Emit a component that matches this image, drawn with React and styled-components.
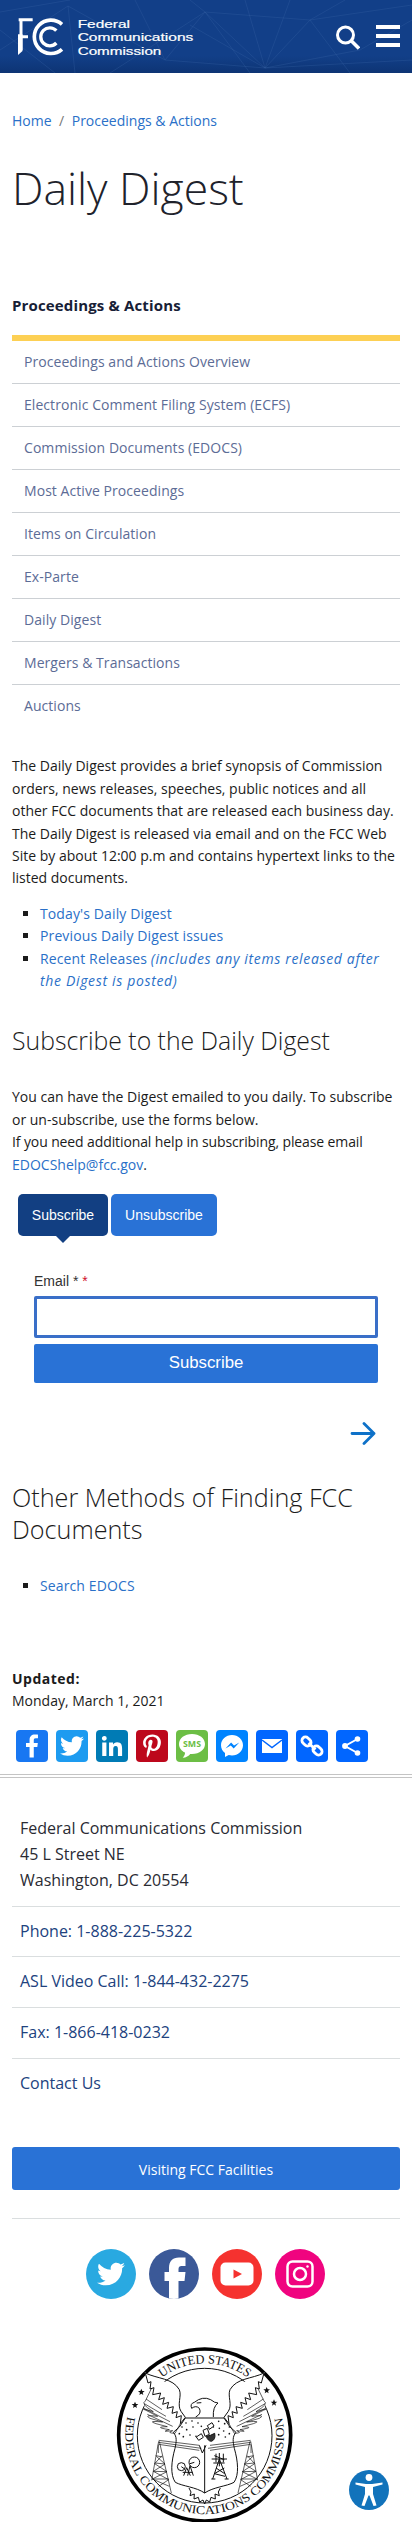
import React from "react";
import styled, { createGlobalStyle } from "styled-components";
import { FaTwitter } from "react-icons/fa";

const GlobalStyle = createGlobalStyle`
  *, *::before, *::after { box-sizing: border-box; }
  body {
    margin: 0;
    background: #fff;
    color: #1b1b1b;
    font: 400 14px/22.4px "Open Sans", sans-serif;
  }
  a { color: #2a70c8; text-decoration: none; }
  h1, h2, h3, p, ul, address { margin: 0; padding: 0; font-style: normal; }
  svg { display: block; }
`;

const Page = styled.div`
  position: relative;
  width: 412px;
  height: 2522px;
  overflow: hidden;
`;

const Header = styled.header`
  position: relative;
  display: flex;
  align-items: flex-start;
  height: 73px;
  background: linear-gradient(#123f88 0, #123f88 56px, #0d3474 73px);
`;

const HeaderLines = styled.svg`
  position: absolute;
  inset: 0;
`;

const Logo = styled.svg`
  position: relative;
  margin: 15px 0 0 15px;
`;

const HeaderTools = styled.div`
  position: relative;
  display: flex;
  gap: 16px;
  margin: 25px 12px 0 auto;
`;

const Main = styled.main`
  padding: 0 12px;
`;

const Breadcrumb = styled.nav`
  display: flex;
  gap: 7.500px;
  padding-top: 37px;
  color: #777;
`;

const Title = styled.h1`
  margin-top: 28px;
  font-size: 44.500px;
  line-height: 56px;
  font-weight: 300;
  color: #20222b;
`;

const SideTitle = styled.h3`
  margin-top: 78px;
  font-size: 15px;
  line-height: 22px;
  font-weight: 700;
  letter-spacing: 0.15px;
  color: #172036;
`;

const SideMenu = styled.ul`
  list-style: none;
  margin-top: 19px;
  border-top: 6px solid #fdd054;
`;

const SideItem = styled.li`
  height: 43px;
  padding: 10px 12px 0;
  border-bottom: 1px solid #ccd0d4;
  letter-spacing: 0.06px;
  &:last-child { border-bottom: 0; }
  a { color: #5c6c96; }
`;

const Copy = styled.p`
  margin-top: ${(p) => p.$top}px;
`;

const Tight = styled.span`
  letter-spacing: -0.11px;
`;

const BulletList = styled.ul`
  list-style: square;
  margin-top: ${(p) => p.$top}px;
  padding-left: 28px;
  letter-spacing: 0.12px;
  li::marker { color: #1b1b1b; }
  em { letter-spacing: 0.66px; }
`;

const SectionTitle = styled.h2`
  margin-top: ${(p) => p.$top}px;
  font-size: ${(p) => p.$size || 25}px;
  line-height: 32px;
  font-weight: 300;
`;

const Tabs = styled.div`
  display: flex;
  gap: 3px;
  margin: 18px 0 0 6px;
  font: 14px/42px "Liberation Sans", sans-serif;
`;

const Tab = styled.div`
  position: relative;
  width: ${(p) => p.$width}px;
  height: 42px;
  border-radius: 5px;
  text-align: center;
  color: #fff;
  background: ${(p) => (p.$active ? "#123f82" : "#2972d6")};
  &::after {
    content: "";
    display: ${(p) => (p.$active ? "block" : "none")};
    position: absolute;
    top: 41px;
    left: 37px;
    border: 8px solid transparent;
    border-top-color: #123f82;
    border-bottom: 0;
  }
`;

const Form = styled.form`
  display: flex;
  flex-direction: column;
  margin: 34px 22px 0;
  font-family: "Liberation Sans", sans-serif;
`;

const Label = styled.label`
  font-size: 14px;
  line-height: 22px;
  color: #333;
  span { color: #d0102c; }
`;

const Field = styled.input`
  height: 42px;
  margin-top: 4px;
  border: 3px solid #3a6fc8;
  border-radius: 2px;
  background: #fff;
  outline: 0;
`;

const Submit = styled.button`
  height: 39px;
  margin-top: 6px;
  padding: 0 0 1px;
  border: 0;
  border-radius: 2px;
  background: #2972d6;
  color: #fff;
  font: 16.800px "Liberation Sans", sans-serif;
`;

const NextArrow = styled.svg`
  margin: 39px 24px 0 auto;
`;

const Updated = styled.div`
  margin-top: 70px;
  b { letter-spacing: 0.5px; }
`;

const ShareRow = styled.div`
  display: flex;
  gap: 8px;
  margin: 18px 4px 0;
`;

const ShareIcon = styled.svg`
  border-radius: 4px;
  background: ${(p) => p.$bg};
`;

const Footer = styled.footer`
  margin-top: 12px;
  border-top: 1px solid #c4c4c4;
  padding: 2px 12px 0;
  &::before {
    content: "";
    display: block;
    margin: 0 -12px;
    border-top: 1px solid #c4c4c4;
  }
`;

const Contact = styled.div`
  padding: 37px 0 0;
  font-size: 16px;
  line-height: 26px;
`;

const Address = styled.address`
  height: 92px;
  padding-left: 8px;
  border-bottom: 1px solid #dadedf;
  color: #2a2b33;
`;

const ContactRow = styled.div`
  height: ${(p) => p.$height}px;
  padding: 11px 8px 0;
  border-bottom: 1px solid ${(p) => (p.$last ? "transparent" : "#dadedf")};
  a { color: #21427e; }
`;

const Visit = styled.a`
  display: block;
  height: 43px;
  margin-top: 38px;
  border-radius: 3px;
  background: #2972d6;
  text-align: center;
  line-height: 45px;
  && { color: #fff; }
`;

const Social = styled.div`
  display: flex;
  justify-content: center;
  gap: 13px;
  margin: 28px 0 0;
  padding: 30px 1px 0 0;
  border-top: 1px solid #dadedf;
`;

const Round = styled.div`
  display: flex;
  align-items: center;
  justify-content: center;
  width: 50px;
  height: 50px;
  border-radius: 50%;
  overflow: hidden;
  background: ${(p) => p.$bg};
  color: #fff;
`;

const Seal = styled.svg`
  margin: 47px 106px 0 104px;
`;

const Accessibility = styled.svg`
  position: absolute;
  left: 349px;
  top: 2470px;
`;

const menu = [
  "Proceedings and Actions Overview",
  "Electronic Comment Filing System (ECFS)",
  "Commission Documents (EDOCS)",
  "Most Active Proceedings",
  "Items on Circulation",
  "Ex-Parte",
  "Daily Digest",
  "Mergers & Transactions",
  "Auctions",
];

const FB = "M17.78 27.5V17.008h3.522l.527-4.09h-4.05v-2.61c0-1.182.33-1.99 2.023-1.99h2.166V4.66c-.375-.05-1.66-.16-3.155-.16-3.123 0-5.26 1.905-5.26 5.405v3.016h-3.53v4.09h3.53V27.5h4.223z";

const shares = [
  ["#1877f2", <path d={FB} />],
  ["#1d9bf0", <path d="M28 8.557a9.913 9.913 0 0 1-2.828.775 4.93 4.93 0 0 0 2.166-2.725 9.738 9.738 0 0 1-3.13 1.194 4.92 4.92 0 0 0-3.593-1.55 4.924 4.924 0 0 0-4.794 6.049c-4.09-.21-7.72-2.17-10.15-5.15a4.942 4.942 0 0 0-.665 2.477c0 1.71.87 3.214 2.19 4.1a4.968 4.968 0 0 1-2.23-.616v.06c0 2.39 1.7 4.38 3.952 4.83-.414.115-.85.174-1.297.174-.318 0-.626-.03-.928-.086a4.935 4.935 0 0 0 4.6 3.42 9.893 9.893 0 0 1-6.114 2.107c-.398 0-.79-.023-1.175-.068a13.953 13.953 0 0 0 7.55 2.213c9.056 0 14.01-7.507 14.01-14.013 0-.213-.005-.426-.015-.637.96-.695 1.795-1.56 2.455-2.55z" />],
  ["#007bb5", <path d="M6.227 12.61h4.19v13.48h-4.19V12.61zm2.095-6.7a2.43 2.43 0 0 1 0 4.86c-1.344 0-2.428-1.09-2.428-2.43s1.084-2.43 2.428-2.43m4.72 6.7h4.02v1.84h.058c.56-1.058 1.927-2.176 3.965-2.176 4.238 0 5.02 2.792 5.02 6.42v7.395h-4.183v-6.56c0-1.564-.03-3.574-2.178-3.574-2.18 0-2.514 1.7-2.514 3.46v6.668h-4.187V12.61z" />],
  ["#bd081c", <path d="M16.539 4.5c-6.277 0-9.442 4.5-9.442 8.253 0 2.272.86 4.293 2.705 5.046.303.125.574.005.662-.33.061-.231.205-.816.27-1.06.088-.331.053-.447-.191-.736-.532-.627-.873-1.439-.873-2.591 0-3.338 2.498-6.327 6.505-6.327 3.548 0 5.497 2.168 5.497 5.062 0 3.81-1.686 7.025-4.188 7.025-1.382 0-2.416-1.142-2.085-2.545.397-1.674 1.166-3.48 1.166-4.689 0-1.081-.581-1.983-1.782-1.983-1.413 0-2.548 1.462-2.548 3.419 0 1.247.421 2.091.421 2.091l-1.699 7.199c-.505 2.137-.076 4.755-.039 5.019.021.158.223.196.314.077.13-.17 1.813-2.247 2.384-4.324.162-.587.929-3.631.929-3.631.46.876 1.801 1.646 3.227 1.646 4.247 0 7.128-3.871 7.128-9.053.003-3.918-3.317-7.568-8.361-7.568z" />],
  ["#6cbe45", <>
    <path d="M16 4C8.700 4 3 8.300 3 14c0 3.800 2.500 6.900 6 8.600.1 2-.8 3.900-2.300 5.100 3.400-.2 6-1.700 7.500-3.800C23 24.600 29 20 29 14 29 8.300 23.300 4 16 4z" />
    <text x="7" y="17.200" fontSize="8.500" fontWeight="700" fontFamily="Open Sans, sans-serif" fill="#6cbe45" textLength="18" lengthAdjust="spacingAndGlyphs">SMS</text>
  </>],
  ["#0084ff", <>
    <path d="M16 5C9.900 5 5 9.500 5 15.200c0 3.200 1.600 6 4 7.800V27l3.700-2c1 .3 2.200.4 3.300.4 6.100 0 11-4.500 11-10.200S22.100 5 16 5z" />
    <path d="M9.500 18.500l5.600-6 2.900 3 5.300-3-5.600 6-2.900-3z" fill="#0084ff" />
  </>],
  ["#0166ff", <>
    <path d="M6 9h20v14H6z" />
    <path d="M6 10l10 7.500L26 10" fill="none" stroke="#0166ff" strokeWidth="1.500" />
  </>],
  ["#0166ff", <g fill="none" stroke="#fff" strokeWidth="2.800">
    <rect x="5.500" y="8" width="10" height="7" rx="3.500" transform="rotate(45 10.500 11.500)" />
    <rect x="16.500" y="17" width="10" height="7" rx="3.500" transform="rotate(45 21.500 20.500)" />
    <path d="M12.500 13l7 6.500" />
  </g>],
  ["#0166ff", <>
    <path d="M21.500 9L9 16l12.500 7" fill="none" stroke="#fff" strokeWidth="2" />
    <circle cx="21.500" cy="9" r="2.800" /><circle cx="9" cy="16" r="2.900" /><circle cx="21.500" cy="23" r="2.800" />
  </>],
];

const STAR = "M0-10L3-3 10-3 4 2 6 9 0 5-6 9-4 2-10-3-3-3z";
const stars = [[426, 217], [407, 256], [802, 212], [824, 249]];
const dots = [[560, 310], [578, 304], [596, 310], [562, 330], [581, 322], [548, 322], [540, 342], [552, 351], [572, 346], [590, 350], [658, 305], [676, 312], [690, 322], [660, 326], [673, 334], [690, 342], [678, 352], [658, 345], [606, 320], [642, 322]];

function SealHalf() {
  return (
    <g fill="none" stroke="#111" strokeWidth="3" strokeLinejoin="round">
      <path d="M438 160C475 178 520 175 540 210C548 230 532 255 545 275L558 293" />
      <path d="M438 160L446 190 455 186 452 208 464 204 460 225 484 220 478 240 495 234 490 254 508 248 503 266 522 261 518 281 534 276 530 294 546 288 543 312 558 293" />
      <path strokeWidth="2" d="M456 207L438 244Q422 252 462 276Q415 262 440 272L475 290Q430 284 452 296L490 307Q440 302 470 312L504 321Q460 322 510 330Q480 338 520 333Q500 340 527 341L543 312" />
      <path strokeWidth="2" d="M440 238L488 270M435 252L500 290M434 266L512 306M444 284L520 320" />
      <path d="M558 295L540 322 522 338C534 352 531 366 527 386C516 425 512 465 528 488C550 500 590 502 616 520" />
      <path strokeWidth="2" d="M478 362L600 377M478 368L606 386M478 374L600 392" />
      <path d="M478 365L457 482M480 365L516 520M477 375V400M469 408L490 412M467 430L497 433M462 455L503 456M459 478L508 478M471 410L497 433 462 455 508 480 478 500M488 408L466 432 503 456 459 478 510 500" strokeWidth="2" />
      <path d="M569 505L575 517 572 528 585 523 584 538 597 533 601 547 611 541 616 553" />
    </g>
  );
}

export default function App() {
  return (
    <>
      <GlobalStyle />
      <Page>
        <Header>
          <HeaderLines width="412" height="73" viewBox="0 0 412 73" fill="none" stroke="#3c69a8" strokeOpacity=".28">
            <path d="M0 12L70 0M0 50L68 6 75 73M68 6L165 60 135 0M165 60L205 12 190 0M205 12L250 73M205 12L265 68 310 20 345 0M265 68L245 0M265 68L290 0M265 68L360 50 412 20M265 68L412 60M310 20L412 5M310 20L350 73M165 60L265 68 190 25M0 30L55 73M110 73L205 12 310 20" />
          </HeaderLines>
          <Logo width="180" height="42" viewBox="45 45 540 126" fill="none" stroke="#fff">
            <path d="M56 59H98M63 59V150M63 110H84" strokeWidth="9" />
            <path d="M67.500 103V153L54 165V103z" fill="#fff" stroke="none" />
            <path d="M186 73A50 50 0 1 0 186 148" strokeWidth="11" />
            <path d="M169 92A27 27 0 1 0 169 129" strokeWidth="10" />
            <g fill="#fff" strokeWidth="0.600" fontFamily="Liberation Sans, sans-serif" fontSize="34">
              <text x="233" y="84" textLength="157" lengthAdjust="spacingAndGlyphs">Federal</text>
              <text x="233" y="124" textLength="347" lengthAdjust="spacingAndGlyphs">Communications</text>
              <text x="233" y="164" textLength="251" lengthAdjust="spacingAndGlyphs">Commission</text>
            </g>
          </Logo>
          <HeaderTools>
            <svg width="24" height="25" viewBox="0 0 24 25" fill="none" stroke="#fff" strokeWidth="3">
              <circle cx="9.500" cy="10" r="8" /><path d="M15 15.500l8 8" strokeWidth="3.500" />
            </svg>
            <svg width="24" height="22" viewBox="0 0 24 22" fill="#fff">
              <path d="M0 0h24v4H0zM0 9h24v4H0zM0 18h24v4H0z" />
            </svg>
          </HeaderTools>
        </Header>

        <Main>
          <Breadcrumb>
            <a href="#">Home</a><span>/</span><a href="#">Proceedings &amp; Actions</a>
          </Breadcrumb>
          <Title>Daily Digest</Title>
          <SideTitle>Proceedings &amp; Actions</SideTitle>
          <SideMenu>
            {menu.map((m) => <SideItem key={m}><a href="#">{m}</a></SideItem>)}
          </SideMenu>

          <Copy $top={27}>
            The Daily Digest provides a brief synopsis of Commission<br />
            orders, news releases, speeches, public notices and all<br />
            other FCC documents that are released each business day.<br />
            The Daily Digest is released via email and on the FCC Web<br />
            Site by about 12:00 p.m and contains hypertext links to the<br />
            listed documents.
          </Copy>
          <BulletList $top={13}>
            <li><a href="#">Today's Daily Digest</a></li>
            <li><a href="#">Previous Daily Digest issues</a></li>
            <li><a href="#">Recent Releases <em>(includes any items released after<br />the Digest is posted)</em></a></li>
          </BulletList>

          <SectionTitle $top={32} $size={24.8}>Subscribe to the Daily Digest</SectionTitle>
          <Copy $top={30}>
            You can have the Digest emailed to you daily. To subscribe<br />
            or un-subscribe, use the forms below.<br />
            <Tight>If you need additional help in subscribing, please email</Tight><br />
            <a href="#">EDOCShelp@fcc.gov</a>.
          </Copy>

          <Tabs>
            <Tab $active $width={90}>Subscribe</Tab>
            <Tab $width={106}>Unsubscribe</Tab>
          </Tabs>
          <Form>
            <Label>Email * <span>*</span></Label>
            <Field aria-label="Email" />
            <Submit type="button">Subscribe</Submit>
          </Form>
          <NextArrow width="26" height="23" viewBox="0 0 26 23" fill="none" stroke="#0e71c8" strokeWidth="2.800" strokeLinecap="round" strokeLinejoin="round">
            <path d="M2 11.500h22M14 1.500l10 10-10 10" />
          </NextArrow>

          <SectionTitle $top={36} $size={25.2}>Other Methods of Finding FCC<br />Documents</SectionTitle>
          <BulletList $top={30}>
            <li><a href="#">Search EDOCS</a></li>
          </BulletList>

          <Updated>
            <b>Updated:</b><br />Monday, March 1, 2021
          </Updated>
          <ShareRow>
            {shares.map(([bg, art], i) => (
              <ShareIcon key={i} $bg={bg} width="32" height="32" viewBox="0 0 32 32" fill="#fff">{art}</ShareIcon>
            ))}
          </ShareRow>
        </Main>

        <Footer>
          <Contact>
            <Address>
              Federal Communications Commission<br />45 L Street NE<br />Washington, DC 20554
            </Address>
            <ContactRow $height={50}><a href="#">Phone: 1-888-225-5322</a></ContactRow>
            <ContactRow $height={51}><a href="#">ASL Video Call: 1-844-432-2275</a></ContactRow>
            <ContactRow $height={51}><a href="#">Fax: 1-866-418-0232</a></ContactRow>
            <ContactRow $height={50} $last><a href="#">Contact Us</a></ContactRow>
          </Contact>
          <Visit href="#">Visiting FCC Facilities</Visit>
          <Social>
            <Round $bg="#29a9e1"><FaTwitter size={28} /></Round>
            <Round $bg="#3b5998">
              <svg width="50" height="50" viewBox="0 0 50 50" fill="#fff">
                <path d="M20 50V32h-4.500v-9H20v-4c0-6.500 3.500-10.500 10-10.500h6.500V17h-4c-2 0-3 1-3 3v3h7l-1 9h-6v18z" />
              </svg>
            </Round>
            <Round $bg="#f5322f">
              <svg width="34" height="24" viewBox="0 0 34 24">
                <rect x="0.500" y="0.500" width="33" height="23" rx="5" fill="#fff" />
                <path d="M13.500 7.500l8.500 4.500-8.500 4.500z" fill="#f5322f" />
              </svg>
            </Round>
            <Round $bg="#f0047f">
              <svg width="28" height="28" viewBox="0 0 28 28" fill="none" stroke="#fff" strokeWidth="2.500">
                <rect x="1.500" y="1.500" width="25" height="25" rx="5" />
                <circle cx="14" cy="14" r="6" /><circle cx="21.500" cy="6.500" r="1.200" fill="#fff" stroke="none" />
              </svg>
            </Round>
          </Social>
          <Seal width="178" height="178" viewBox="350 79 534 534">
            <circle cx="616" cy="346" r="258" fill="#fff" stroke="#000" strokeWidth="11" />
            <circle cx="616" cy="348" r="202" fill="none" stroke="#111" strokeWidth="3" />
            <defs>
              <path id="sealTop" d="M401 346A215 215 0 0 1 831 346" />
              <path id="sealBottom" d="M385 288A238 238 0 1 0 847 288" />
            </defs>
            <g fontFamily="Liberation Serif, serif" fill="#111">
              <text fontSize="38" textAnchor="middle" textLength="276" lengthAdjust="spacingAndGlyphs"><textPath href="#sealTop" startOffset="50%">UNITED STATES</textPath></text>
              <text fontSize="36" textLength="856" lengthAdjust="spacingAndGlyphs"><textPath href="#sealBottom" startOffset="2">FEDERAL COMMUNICATIONS COMMISSION</textPath></text>
            </g>
            {stars.map(([x, y]) => <path key={x} d={STAR} transform={`translate(${x} ${y})`} fill="#111" />)}
            <path d="M436 158L478 178 540 205 545 290 520 335 440 280 432 240 456 205z" fill="#fff" />
            <path d="M796 158L754 178 692 205 687 290 712 335 792 280 800 240 776 205z" fill="#fff" />
            <path d="M558 295H674L710 338 704 386 704 488 616 520 528 488 527 386 522 338z" fill="#fff" />
            <SealHalf />
            <g transform="translate(1232 0) scale(-1 1)"><SealHalf /></g>
            <g fill="none" stroke="#111" strokeWidth="3">
              <path d="M558 295H674M616 377V520M600 377L609 400 620 377" />
              <path d="M589 292Q608 282 600 266Q590 256 577 266Q571 252 585 248Q610 228 634 240Q646 250 656 250Q640 262 642 292" />
              <path d="M592 250L606 249" />
            </g>
            {dots.map(([x, y]) => <circle key={`${x}-${y}`} cx={x} cy={y} r="2.500" fill="#111" />)}
            <g stroke="#111" strokeWidth="3" fill="#fff">
              <path d="M624 318L638 309 644 319 630 329zM591 352L606 342 612 353 598 362zM611 332L624 326 630 344 617 350z" />
              <path d="M621 350Q634 348 646 341Q650 360 636 365Q625 364 621 350z" fill="#333" />
              <circle cx="546" cy="441" r="12" /><circle cx="585" cy="428" r="16" />
              <path d="M546 441L556 448M585 428L572 432M553 468L562 444 573 468M565 468L572 438 582 468M550 458H580" />
              <path d="M640 478L660 418 683 478M645 462L677 470M650 445L676 462M675 445L645 462M636 478H648M676 478H688M637 418H683M645 408L675 420M660 400V440M650 402V428M672 402V428M642 430H676" fill="none" />
            </g>
          </Seal>
        </Footer>

        <Accessibility width="40" height="40" viewBox="0 0 40 40">
          <circle cx="20" cy="20" r="20" fill="#1273bb" />
          <circle cx="20" cy="7.500" r="3.400" fill="#fff" />
          <path d="M6.500 12.500l10.500 1.500h6l10.500-1.500v2l-9.500 2.500v7l3.500 11.500-3 .5-4-10.500h-1l-4 10.500-3-.5L16 24v-7l-9.500-2.500z" fill="#fff" />
        </Accessibility>
      </Page>
    </>
  );
}
